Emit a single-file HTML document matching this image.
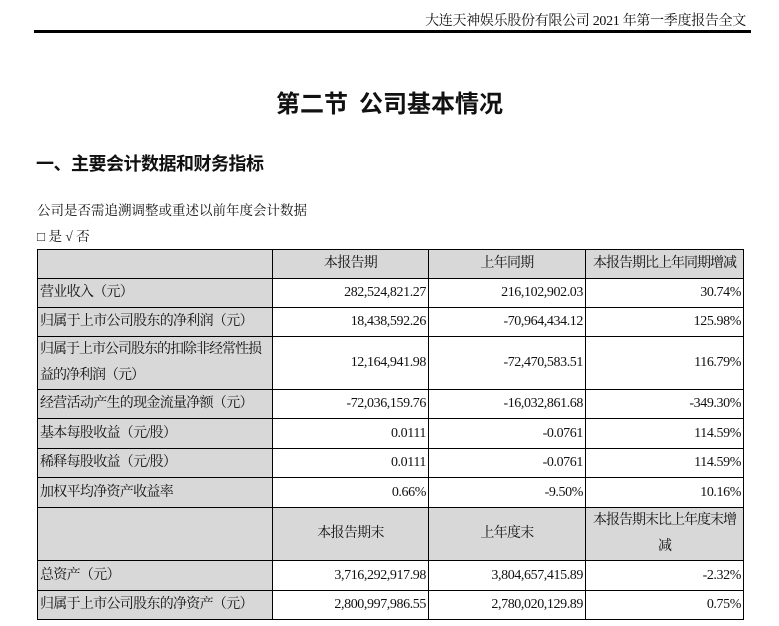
<!DOCTYPE html>
<html><head><meta charset="utf-8"><style>
body{margin:0;width:779px;height:626px;background:#fff;position:relative;overflow:hidden;font-family:"Liberation Serif","Noto Serif CJK SC",serif;color:#111}
.hd{position:absolute;right:33px;top:10px;font-size:14px;letter-spacing:-0.3px}
.ln{position:absolute;left:34px;width:717px;top:30px;height:3px;background:#000}
.t{position:absolute;left:0;width:779px;text-align:center;top:84px;font-size:24px;font-weight:bold;font-family:"Noto Sans CJK SC",sans-serif}
.h2{position:absolute;left:36px;top:150px;font-size:18px;font-weight:bold;font-family:"Noto Sans CJK SC",sans-serif;letter-spacing:-0.5px}
.p{position:absolute;left:37px;font-size:13.5px}
table{position:absolute;left:37px;top:249px;border-collapse:collapse;font-size:14px;table-layout:fixed;width:706px}
td{border:1.3px solid #000;padding:0 2px;line-height:26px;letter-spacing:-0.7px;overflow:hidden}
td.g{background:#d8d8d8}
td.n{text-align:right;letter-spacing:-0.4px}
td.c{text-align:center}
</style></head><body>
<div class="hd">大连天神娱乐股份有限公司 2021 年第一季度报告全文</div>
<div class="ln"></div>
<div class="t">第二节&nbsp; 公司基本情况</div>
<div class="h2">一、主要会计数据和财务指标</div>
<div class="p" style="top:199px">公司是否需追溯调整或重述以前年度会计数据</div>
<div class="p" style="top:225px">□ 是 √ 否</div>
<table>
<colgroup><col style="width:235px"><col style="width:156px"><col style="width:157px"><col style="width:158px"></colgroup>
<tr style="height:29px"><td class="g"></td><td class="g c">本报告期</td><td class="g c" >上年同期</td><td class="g c" style="white-space:nowrap;letter-spacing:-1px">本报告期比上年同期增减</td></tr>
<tr style="height:29px"><td class="g">营业收入（元）</td><td class="n">282,524,821.27</td><td class="n">216,102,902.03</td><td class="n">30.74%</td></tr>
<tr style="height:29px"><td class="g">归属于上市公司股东的净利润（元）</td><td class="n">18,438,592.26</td><td class="n">-70,964,434.12</td><td class="n">125.98%</td></tr>
<tr style="height:53px"><td class="g" style="letter-spacing:-1px">归属于上市公司股东的扣除非经常性损<br>益的净利润（元）</td><td class="n">12,164,941.98</td><td class="n">-72,470,583.51</td><td class="n">116.79%</td></tr>
<tr style="height:29px"><td class="g">经营活动产生的现金流量净额（元）</td><td class="n">-72,036,159.76</td><td class="n">-16,032,861.68</td><td class="n">-349.30%</td></tr>
<tr style="height:30px"><td class="g">基本每股收益（元/股）</td><td class="n">0.0111</td><td class="n">-0.0761</td><td class="n">114.59%</td></tr>
<tr style="height:29px"><td class="g">稀释每股收益（元/股）</td><td class="n">0.0111</td><td class="n">-0.0761</td><td class="n">114.59%</td></tr>
<tr style="height:30px"><td class="g">加权平均净资产收益率</td><td class="n">0.66%</td><td class="n">-9.50%</td><td class="n">10.16%</td></tr>
<tr style="height:52px"><td class="g"></td><td class="g c">本报告期末</td><td class="g c">上年度末</td><td class="g c" style="letter-spacing:-1px">本报告期末比上年度末增<br>减</td></tr>
<tr style="height:30px"><td class="g">总资产（元）</td><td class="n">3,716,292,917.98</td><td class="n">3,804,657,415.89</td><td class="n">-2.32%</td></tr>
<tr style="height:29px"><td class="g">归属于上市公司股东的净资产（元）</td><td class="n">2,800,997,986.55</td><td class="n">2,780,020,129.89</td><td class="n">0.75%</td></tr>
</table>
</body></html>
